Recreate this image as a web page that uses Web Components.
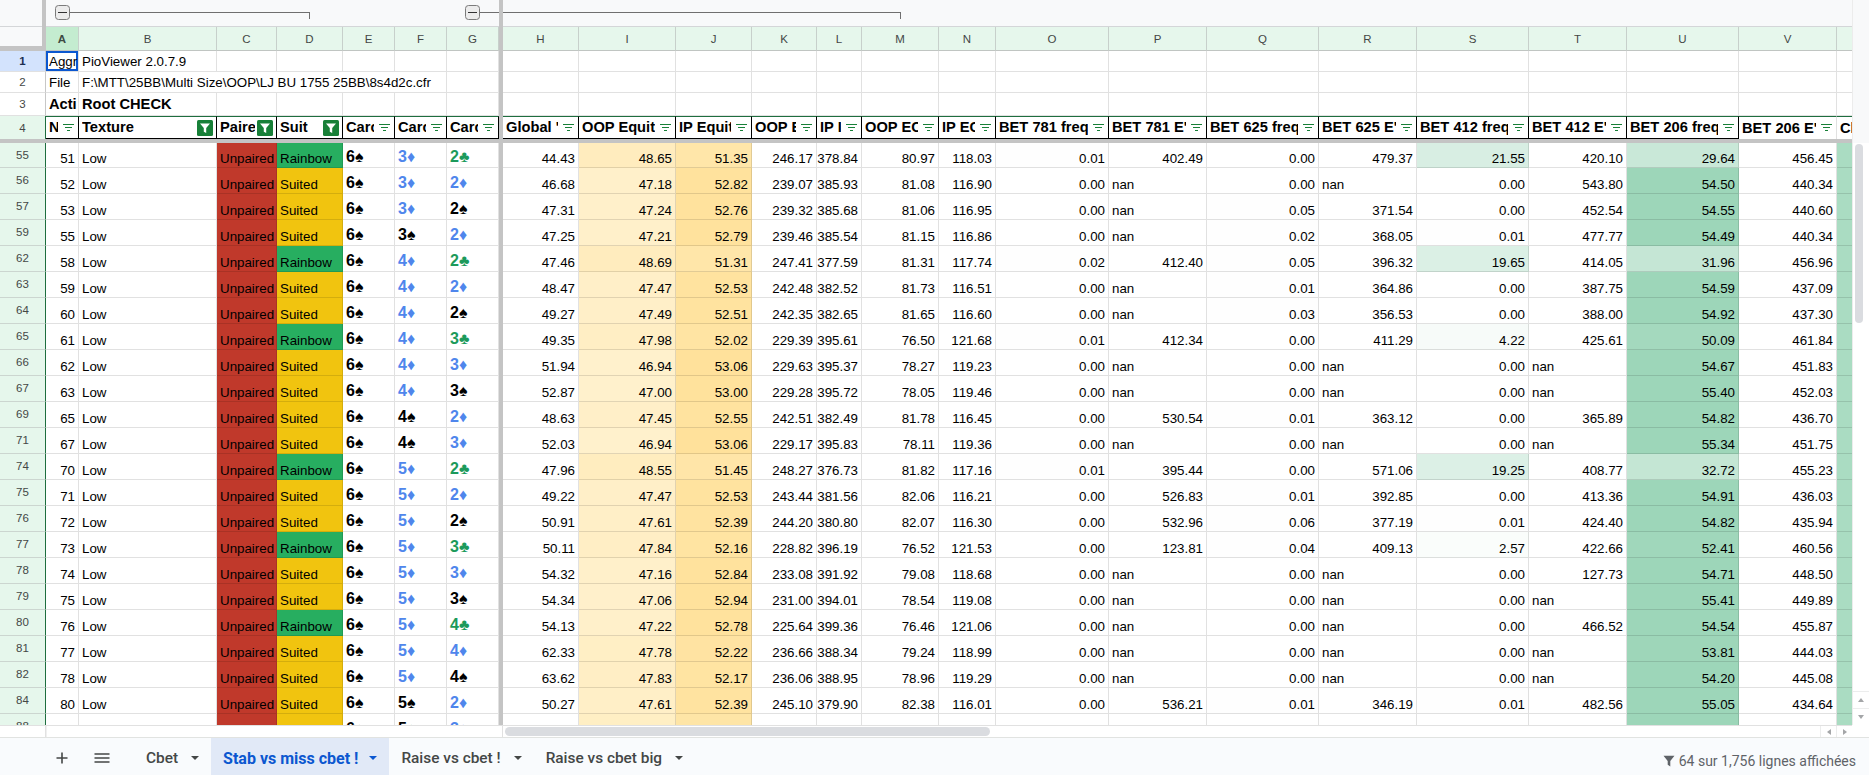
<!DOCTYPE html>
<html>
<head>
<meta charset="utf-8">
<title>Stab vs miss cbet</title>
<style>
  html, body { margin: 0; padding: 0; background: #fff; overflow: hidden; }
</style>
</head>
<body>
<sheet-app>
  <sheet-grid></sheet-grid>
  <sheet-tabbar>
    <sheet-tab>Cbet</sheet-tab>
    <sheet-tab active>Stab vs miss cbet !</sheet-tab>
    <sheet-tab>Raise vs cbet !</sheet-tab>
    <sheet-tab>Raise vs cbet big</sheet-tab>
    <span slot="status">64 sur 1,756 lignes affichées</span>
  </sheet-tabbar>
</sheet-app>

<script>
const COLS = '46px 33px 138px 60px 66px 52px 52px 52px 4px 76px 97px 76px 65px 45px 77px 57px 113px 98px 112px 98px 112px 98px 112px 98px 15px'

const S = '\u2660', D = '\u2666', C = '\u2663'

// row, n, suit, cards, then H..V
const DATA = [
  [55,51,'R','6s 3d 2c','44.43 48.65 51.35 246.17 378.84 80.97 118.03 0.01 402.49 0.00 479.37 21.55 420.10 29.64 456.45'],
  [56,52,'S','6s 3d 2d','46.68 47.18 52.82 239.07 385.93 81.08 116.90 0.00 nan 0.00 nan 0.00 543.80 54.50 440.34'],
  [57,53,'S','6s 3d 2s','47.31 47.24 52.76 239.32 385.68 81.06 116.95 0.00 nan 0.05 371.54 0.00 452.54 54.55 440.60'],
  [59,55,'S','6s 3s 2d','47.25 47.21 52.79 239.46 385.54 81.15 116.86 0.00 nan 0.02 368.05 0.01 477.77 54.49 440.34'],
  [62,58,'R','6s 4d 2c','47.46 48.69 51.31 247.41 377.59 81.31 117.74 0.02 412.40 0.05 396.32 19.65 414.05 31.96 456.96'],
  [63,59,'S','6s 4d 2d','48.47 47.47 52.53 242.48 382.52 81.73 116.51 0.00 nan 0.01 364.86 0.00 387.75 54.59 437.09'],
  [64,60,'S','6s 4d 2s','49.27 47.49 52.51 242.35 382.65 81.65 116.60 0.00 nan 0.03 356.53 0.00 388.00 54.92 437.30'],
  [65,61,'R','6s 4d 3c','49.35 47.98 52.02 229.39 395.61 76.50 121.68 0.01 412.34 0.00 411.29 4.22 425.61 50.09 461.84'],
  [66,62,'S','6s 4d 3d','51.94 46.94 53.06 229.63 395.37 78.27 119.23 0.00 nan 0.00 nan 0.00 nan 54.67 451.83'],
  [67,63,'S','6s 4d 3s','52.87 47.00 53.00 229.28 395.72 78.05 119.46 0.00 nan 0.00 nan 0.00 nan 55.40 452.03'],
  [69,65,'S','6s 4s 2d','48.63 47.45 52.55 242.51 382.49 81.78 116.45 0.00 530.54 0.01 363.12 0.00 365.89 54.82 436.70'],
  [71,67,'S','6s 4s 3d','52.03 46.94 53.06 229.17 395.83 78.11 119.36 0.00 nan 0.00 nan 0.00 nan 55.34 451.75'],
  [74,70,'R','6s 5d 2c','47.96 48.55 51.45 248.27 376.73 81.82 117.16 0.01 395.44 0.00 571.06 19.25 408.77 32.72 455.23'],
  [75,71,'S','6s 5d 2d','49.22 47.47 52.53 243.44 381.56 82.06 116.21 0.00 526.83 0.01 392.85 0.00 413.36 54.91 436.03'],
  [76,72,'S','6s 5d 2s','50.91 47.61 52.39 244.20 380.80 82.07 116.30 0.00 532.96 0.06 377.19 0.01 424.40 54.82 435.94'],
  [77,73,'R','6s 5d 3c','50.11 47.84 52.16 228.82 396.19 76.52 121.53 0.00 123.81 0.04 409.13 2.57 422.66 52.41 460.56'],
  [78,74,'S','6s 5d 3d','54.32 47.16 52.84 233.08 391.92 79.08 118.68 0.00 nan 0.00 nan 0.00 127.73 54.71 448.50'],
  [79,75,'S','6s 5d 3s','54.34 47.06 52.94 231.00 394.01 78.54 119.08 0.00 nan 0.00 nan 0.00 nan 55.41 449.89'],
  [80,76,'R','6s 5d 4c','54.13 47.22 52.78 225.64 399.36 76.46 121.06 0.00 nan 0.00 nan 0.00 466.52 54.54 455.87'],
  [81,77,'S','6s 5d 4d','62.33 47.78 52.22 236.66 388.34 79.24 118.99 0.00 nan 0.00 nan 0.00 nan 53.81 444.03'],
  [82,78,'S','6s 5d 4s','63.62 47.83 52.17 236.06 388.95 78.96 119.29 0.00 nan 0.00 nan 0.00 nan 54.20 445.08'],
  [84,80,'S','6s 5s 2d','50.27 47.61 52.39 245.10 379.90 82.38 116.01 0.00 536.21 0.01 346.19 0.01 482.56 55.05 434.64'],
  [88,84,'S','6s 5s 3d','']
]

// header labels as far as the narrow columns show them
const HEADERS = ['N','Texture','Paire','Suit','Carc','Carc','Carc',null,"Global '",'OOP Equit','IP Equit','OOP E','IP I','OOP EC','IP EC','BET 781 freq',"BET 781 E'",'BET 625 freq',"BET 625 E'",'BET 412 freq',"BET 412 E'",'BET 206 freq',"BET 206 E'",'Cl']
const LETTERS = 'ABCDEFG HIJKLMNOPQRSTUV'.split('')

const CELL_CSS = `
  :host { display: grid; grid-template-columns: ${COLS}; font: 13.33px "Liberation Sans", Arial, sans-serif; color: #000; }
  .c { box-sizing: border-box; min-width: 0; overflow: hidden; white-space: nowrap; display: flex; align-items: flex-end;
       padding: 0 3px 1px; border-right: 1px solid rgba(0,0,0,.118); border-bottom: 1px solid rgba(0,0,0,.118); line-height: 15px; }
  .num { justify-content: flex-end; }
  .bar { background: #c4c4c4; }
  .hd { background: #e6f7ec; border-right: 1px solid #c7d0cb; border-bottom: 1px solid #c7d0cb; justify-content: center; align-items: center;
        padding: 0; color: #444746; font-size: 11.5px; }
`

function filterIcon(active) {
  if (active) {
    return `<svg class="fa" width="16" height="16" viewBox="0 0 16 16"><rect width="16" height="16" rx="1.5" fill="#188038"/><path d="M3 3.5h10l-3.8 4.6V13l-2.4-1.3V8.1z" fill="#fff"/></svg>`
  }
  return `<svg class="fi" width="11" height="8" viewBox="0 0 11 8"><path d="M0 .5h11M2 3.5h7M4 6.5h3" stroke="#188038" stroke-width="1" fill="none"/></svg>`
}

class SheetRow extends HTMLElement {
  constructor() {
    super()
    this.attachShadow({ mode: 'open' })
  }
  set row(d) {
    const [num, n, suit, cards, vals] = d
    const v = vals ? vals.split(' ') : []
    let html = `<style>${CELL_CSS}
      :host { height: ${num === 55 ? 25 : 26}px; }
      .rn { background: #e6f7ec; border-right: 1px solid #1e6e3f; border-bottom: 1px solid #ccd6d0; justify-content: center; align-items: center;
            padding: 0; color: #444746; font-size: 11.5px; }
      .u { background: #c0392b; } .r { background: #27ae60; } .s { background: #f1c40f; }
      .card { font-size: 16px; font-weight: 700; line-height: 18px; padding-left: 3px; }
      .card i { font-style: normal; font-size: 16px; }
      .k { color: #000; } .b { color: #4f86ec; } .g { color: #1c9a5b; }
      .w { background: #aadcc2; padding: 0; border-right: 0; }
    </style>`
    html += `<div class="c rn">${num}</div>`
    html += `<div class="c num">${vals ? n : ''}</div><div class="c">${vals ? 'Low' : ''}</div>`
    html += `<div class="c u">Unpaired</div>`
    html += suit === 'R' ? `<div class="c r">Rainbow</div>` : `<div class="c s">Suited</div>`
    for (const card of cards.split(' ')) {
      const cls = { s: 'k', d: 'b', c: 'g' }[card[1]]
      const g = { s: S, d: D, c: C }[card[1]]
      html += `<div class="c card ${cls}">${card[0]}<i>${g}</i></div>`
    }
    html += `<div class="bar"></div>`
    const tint = (x) => {
      const t = Math.min(x / 54.5, 1)
      return `rgb(${255 - 98 * t | 0},${255 - 41 * t | 0},${255 - 70 * t | 0})`
    }
    const eq = (x) => `rgb(255,${241 - (x - 47) * 2.5 | 0},${204 - (x - 47) * 8 | 0})`
    for (let i = 0; i < 15; i++) {
      const x = v[i] === undefined ? '' : v[i]
      let bg = ''
      if (i === 1 || i === 2) bg = vals ? eq(+x) : (i === 1 ? '#ffefc4' : '#fee5a6')
      if (i === 7 || i === 9 || i === 11 || i === 13) bg = x ? tint(+x) : (i === 13 ? '#9dd6b9' : '')
      const style = bg ? ` style="background:${bg}"` : ''
      html += `<div class="c ${x === 'nan' ? '' : 'num'}"${style}>${x}</div>`
    }
    html += `<div class="c w"></div>`
    this.shadowRoot.innerHTML = html
  }
}
customElements.define('sheet-row', SheetRow)

class SheetFrozenRows extends HTMLElement {
  constructor() {
    super()
    this.attachShadow({ mode: 'open' })
    const blanks = (n) => '<div class="c"></div>'.repeat(n)
    const hdr = HEADERS.map((t, i) => {
      if (t === null) return '<div class="bar"></div>'
      const active = i >= 1 && i <= 3
      const last = i === 22
      const noFilter = i === 23
      return `<div class="c h ${last ? 'nb' : ''} ${noFilter ? 'end' : ''}"><span>${t}</span>${noFilter ? '' : filterIcon(active)}</div>`
    }).join('')
    this.shadowRoot.innerHTML = `<style>${CELL_CSS}
      .rn { background: #fff; border-right: 1px solid #c7c7c7; border-bottom: 1px solid #e1e1e1; display: flex; align-items: center; justify-content: center;
            color: #444746; font-size: 11.5px; box-sizing: border-box; }
      .sel { background: #d3e3fd; color: #1b2f52; font-weight: 700; }
      .r4 { background: #e6f7ec; border-right: 1px solid #1e6e3f; border-bottom: 0; }
      .a1 { box-shadow: inset 0 0 0 2px #0b57d0; padding-bottom: 2px; padding-left: 3px; padding-right: 0; }
      .b { font-size: 14.67px; font-weight: 700; line-height: 17px; align-items: center; padding-bottom: 0; padding-right: 0; }
      .file { grid-column: span 5; }
      .top { align-items: center; padding-bottom: 0; }
      .h { font-size: 14.67px; font-weight: 700; align-items: center; padding: 0 4px 0 3px; line-height: 17px;
           border-top: 1px solid #1e6e3f; border-right: 1px solid #000; border-bottom: 1px solid #000; }
      .h span { flex: 1; min-width: 0; overflow: hidden; }
      .h svg { flex: none; margin-left: 5px; }
      .h svg.fa { margin-left: 2px; margin-right: -1px; }
      .h.nb { border-right: 1px solid #e1e1e1; border-bottom: 0; }
      .h.end { border-right: 0; border-bottom: 0; padding-right: 0; }
    </style>
    <div class="rn sel" style="height:21px">1</div>
    <div class="c top a1">Aggr</div><div class="c top">PioViewer 2.0.7.9</div>${blanks(5)}<div class="bar"></div>${blanks(15)}<div class="c" style="border-right:0"></div>
    <div class="rn" style="height:21px">2</div>
    <div class="c top">File</div><div class="c top file">F:\\MTT\\25BB\\Multi Size\\OOP\\LJ BU 1755 25BB\\8s4d2c.cfr</div><div class="c"></div><div class="bar"></div>${blanks(15)}<div class="c" style="border-right:0"></div>
    <div class="rn" style="height:23px">3</div>
    <div class="c b">Acti</div><div class="c b">Root CHECK</div>${blanks(5)}<div class="bar"></div>${blanks(15)}<div class="c" style="border-right:0"></div>
    <div class="rn r4" style="height:23px">4</div>
    ${hdr}`
  }
}
customElements.define('sheet-frozen-rows', SheetFrozenRows)

class SheetColumnHeader extends HTMLElement {
  constructor() {
    super()
    this.attachShadow({ mode: 'open' })
    const cells = LETTERS.map((l, i) => l === ' '
      ? '<div class="bar"></div>'
      : `<div class="hd ${i === 0 ? 'on' : ''}" >${l}</div>`).join('')
    this.shadowRoot.innerHTML = `<style>${CELL_CSS}
      :host { height: 24px; }
      .hd { display: flex; box-sizing: border-box; border-bottom-color: #c0c5c2; }
      .on { background: #c4ecd0; font-weight: 700; color: #3d4a42; }
      .corner { box-sizing: border-box; background: #f8f9fa; border-right: 4px solid #c4c4c4; border-bottom: 5px solid #c4c4c4; }
      .w { border-right: 0; }
    </style>
    <div class="corner"></div>${cells}<div class="hd w"></div>`
  }
}
customElements.define('sheet-column-header', SheetColumnHeader)

class GroupBracket extends HTMLElement {
  constructor() {
    super()
    this.attachShadow({ mode: 'open' })
    this.shadowRoot.innerHTML = `<style>
      :host { display: flex; align-items: flex-start; height: 100%; padding-top: 5px; box-sizing: border-box; }
      .btn { box-sizing: border-box; flex: none; width: 15px; height: 15px; border: 1.5px solid #7b7b7b; border-radius: 3.5px; background: #ececec;
             display: flex; align-items: center; justify-content: center; }
      .btn::after { content: ""; width: 9px; height: 1px; background: #333; }
      .line { flex: 1; height: 6px; margin-top: 7px; border-top: 1px solid #6f6f6f; border-right: 1px solid #6f6f6f; }
    </style><div class="btn"></div><div class="line"></div>`
  }
}
customElements.define('group-bracket', GroupBracket)

class SheetGroupRow extends HTMLElement {
  constructor() {
    super()
    this.attachShadow({ mode: 'open' })
    this.shadowRoot.innerHTML = `<style>
      :host { display: flex; height: 27px; box-sizing: border-box; background: #f8f9fa; border-bottom: 1px solid #d4d6d8; }
      .corner { box-sizing: border-box; flex: none; width: 46px; border-right: 4px solid #c4c4c4; margin-bottom: -1px; }
      group-bracket { flex: none; }
      .g1 { margin-left: 9px; width: 255px; }
      .g2 { margin-left: 155px; width: 436px; }
    </style>
    <div class="corner"></div><group-bracket class="g1"></group-bracket><group-bracket class="g2"></group-bracket>`
  }
}
customElements.define('sheet-group-row', SheetGroupRow)

class SheetGrid extends HTMLElement {
  constructor() {
    super()
    this.attachShadow({ mode: 'open' })
    this.shadowRoot.innerHTML = `<style>
      :host { display: grid; grid-template-columns: 1852px 17px; grid-template-rows: 725px 13px; flex: none; }
      .main { position: relative; overflow: hidden; min-width: 0; }
      .hbar { height: 4px; background: #c4c4c4; }
      .vfreeze { position: absolute; left: 499px; top: 0; bottom: 0; width: 4px; background: #c4c4c4; }
      .vs { box-sizing: border-box; border-left: 1px solid #ececec; display: flex; flex-direction: column; background: #fff; }
      .vs .top { height: 143px; flex: none; background: #f8f9fa; border-bottom: 0; }
      .vs .track { flex: 1; padding: 1px 6px 0 1px; }
      .vs .thumb { height: 179px; background: #dadce0; border-radius: 5px; margin-left: 1px; }
      .vs .btn { height: 16px; flex: none; border-top: 1px solid #eceded; display: flex; align-items: center; justify-content: center; }
      .up { width: 0; height: 0; border: 3.5px solid transparent; border-top: 0; border-bottom: 4px solid #a4a6a8; }
      .dn { width: 0; height: 0; border: 3.5px solid transparent; border-bottom: 0; border-top: 4px solid #a4a6a8; }
      .hs { box-sizing: border-box; display: flex; align-items: center; border-top: 1px solid #e1e1e1; border-bottom: 1px solid #e1e3e1; }
      .hs .left { flex: none; width: 46px; height: 100%; box-sizing: border-box; border-right: 1px solid #e1e1e1; }
      .hs .left2 { flex: none; width: 457px; height: 100%; box-sizing: border-box; border-left: 1px solid #f0f0f0; border-right: 1px solid #e1e1e1; }
      .hs .thumb { flex: none; width: 485px; height: 9px; margin-left: 2px; background: #dadce0; border-radius: 5px; }
      .hs .fill { flex: 1; }
      .hs .arr { flex: none; width: 16px; height: 100%; box-sizing: border-box; border-left: 1px solid #eceded; display: flex; align-items: center; justify-content: center; }
      .lf { width: 0; height: 0; border: 3.5px solid transparent; border-left: 0; border-right: 4px solid #a4a6a8; }
      .rt { width: 0; height: 0; border: 3.5px solid transparent; border-right: 0; border-left: 4px solid #a4a6a8; }
      .corner2 { box-sizing: border-box; border-bottom: 1px solid #e1e3e1; }
    </style>
    <div class="main" id="main">
      <sheet-group-row></sheet-group-row>
      <sheet-column-header></sheet-column-header>
      <sheet-frozen-rows></sheet-frozen-rows>
      <div class="hbar"></div>
      <div class="vfreeze"></div>
    </div>
    <div class="vs">
      <div class="top"></div>
      <div class="track"><div class="thumb"></div></div>
      <div class="btn"><div class="up"></div></div>
      <div class="btn"><div class="dn"></div></div>
    </div>
    <div class="hs">
      <div class="left"></div><div class="left2"></div>
      <div class="thumb"></div><div class="fill"></div>
      <div class="arr"><div class="lf"></div></div><div class="arr"><div class="rt"></div></div>
    </div>
    <div class="corner2"></div>`
    const main = this.shadowRoot.getElementById('main')
    const bar = main.querySelector('.vfreeze')
    for (const d of DATA) {
      const r = document.createElement('sheet-row')
      r.row = d
      main.insertBefore(r, bar)
    }
  }
}
customElements.define('sheet-grid', SheetGrid)

class SheetTab extends HTMLElement {
  constructor() {
    super()
    this.attachShadow({ mode: 'open' })
    this.shadowRoot.innerHTML = `<style>
      :host { display: flex; align-items: center; height: 100%; box-sizing: border-box; padding: 3px 12px 0; gap: 13px; color: #444746;
              font: 500 15.4px Roboto, "Liberation Sans", sans-serif; white-space: nowrap; }
      :host([active]) { background: #e1e9f7; color: #0b57d0; font-weight: 700; font-size: 16px; gap: 11px; }
      .caret { width: 0; height: 0; border: 4px solid transparent; border-bottom: 0; border-top: 4.5px solid currentColor; }
    </style><slot></slot><span class="caret"></span>`
  }
}
customElements.define('sheet-tab', SheetTab)

class SheetTabbar extends HTMLElement {
  constructor() {
    super()
    this.attachShadow({ mode: 'open' })
    this.shadowRoot.innerHTML = `<style>
      :host { display: flex; align-items: stretch; flex: none; height: 37px; box-sizing: border-box; background: #f9fbfd; padding-left: 56px; }
      .tool { display: flex; align-items: center; flex: none; box-sizing: border-box; padding-top: 3px; }
      .add { width: 38px; }
      .menu { width: 40px; }
      .status { margin-left: auto; display: flex; align-items: center; gap: 4px; padding: 9px 13px 0 0; color: #5f6368;
                font: 400 14px Roboto, "Liberation Sans", sans-serif; white-space: nowrap; }
    </style>
    <div class="tool add"><svg width="12" height="12" viewBox="0 0 12 12"><path d="M6 .5v11M.5 6h11" stroke="#444746" stroke-width="1.6"/></svg></div>
    <div class="tool menu"><svg width="16" height="10" viewBox="0 0 16 10"><path d="M.5 1h15M.5 5h15M.5 9h15" stroke="#444746" stroke-width="1.5"/></svg></div>
    <slot></slot>
    <div class="status">
      <svg width="12" height="12" viewBox="0 0 12 12"><path d="M.5 .8h11L7.3 6v5.4L4.7 9.8V6z" fill="#5f6368"/></svg>
      <slot name="status"></slot>
    </div>`
  }
}
customElements.define('sheet-tabbar', SheetTabbar)

class SheetApp extends HTMLElement {
  constructor() {
    super()
    this.attachShadow({ mode: 'open' })
    this.shadowRoot.innerHTML = `<style>
      :host { display: flex; flex-direction: column; width: 1869px; height: 775px; overflow: hidden; }
    </style><slot></slot>`
  }
}
customElements.define('sheet-app', SheetApp)
</script>
</body>
</html>
